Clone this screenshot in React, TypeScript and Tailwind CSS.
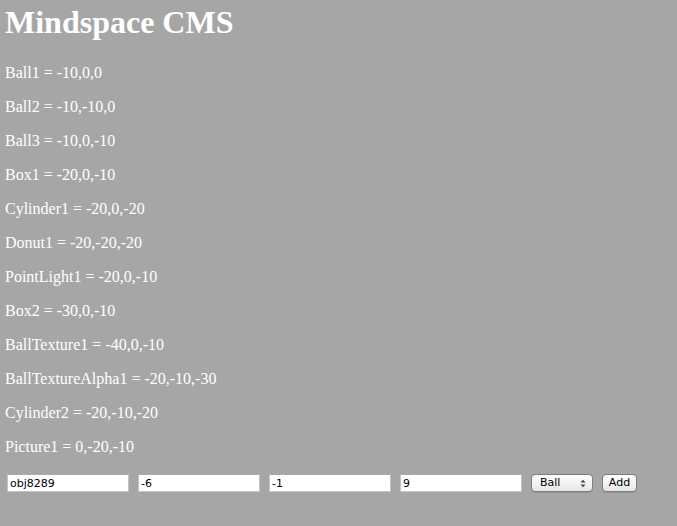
import React from "react";

const items = [
  "Ball1 = -10,0,0",
  "Ball2 = -10,-10,0",
  "Ball3 = -10,0,-10",
  "Box1 = -20,0,-10",
  "Cylinder1 = -20,0,-20",
  "Donut1 = -20,-20,-20",
  "PointLight1 = -20,0,-10",
  "Box2 = -30,0,-10",
  "BallTexture1 = -40,0,-10",
  "BallTextureAlpha1 = -20,-10,-30",
  "Cylinder2 = -20,-10,-20",
  "Picture1 = 0,-20,-10",
];

export default function App() {
  const inputCls =
    "w-[122px] h-[18px] bg-white border border-[#c4c4c4] border-t-[#a9a9a9] px-[2px] text-[11px] leading-[16px] text-black outline-none font-['DejaVu_Sans',sans-serif]";
  return (
    <div className="min-h-screen w-full bg-[#a6a6a6] pt-[4px] px-[5px] font-['Liberation_Serif',serif] text-white">
      <h1 className="text-[32px] font-bold leading-[37px] mt-0 mb-[23px]">Mindspace CMS</h1>
      {items.map((t) => (
        <p key={t} className="text-[16px] leading-[18px] my-[16px]">
          {t}
        </p>
      ))}
      <div className="flex items-center gap-[9px] pl-[2px] mt-[18px]">
        <input className={inputCls} defaultValue="obj8289" />
        <input className={inputCls} defaultValue="-6" />
        <input className={inputCls} defaultValue="-1" />
        <input className={inputCls} defaultValue="9" />
        <div className="relative w-[62px] h-[18px] rounded-[4px] border border-[#7d7d7d] bg-gradient-to-b from-white to-[#e6e6e6] text-black text-[11px] leading-[16px] font-['DejaVu_Sans',sans-serif] pl-[8px] shadow-[0_1px_0_rgba(0,0,0,0.1)]">
          Ball
          <svg className="absolute right-[6px] top-[4px]" width="6" height="9" viewBox="0 0 6 9">
            <path d="M0.5 3.5 L3 0.8 L5.5 3.5 Z" fill="#444" />
            <path d="M0.5 5.5 L3 8.2 L5.5 5.5 Z" fill="#444" />
          </svg>
        </div>
        <button className="w-[35px] h-[18px] rounded-[4px] border border-[#7d7d7d] bg-gradient-to-b from-white to-[#e6e6e6] text-black text-[11px] leading-[16px] font-['DejaVu_Sans',sans-serif] text-center shadow-[0_1px_0_rgba(0,0,0,0.1)]">
          Add
        </button>
      </div>
    </div>
  );
}
